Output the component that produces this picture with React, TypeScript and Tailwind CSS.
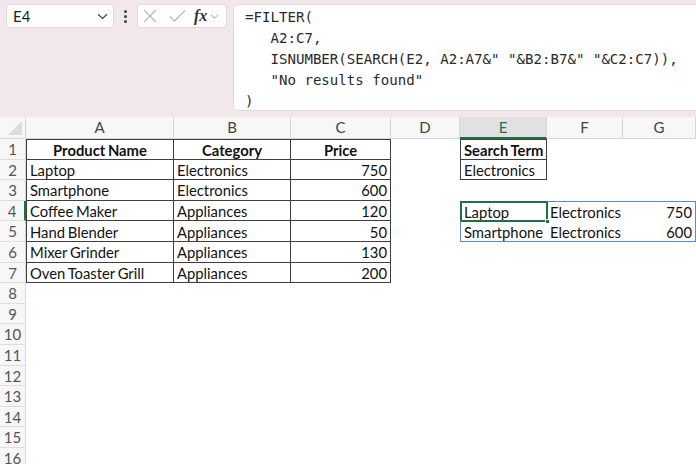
import React from "react";

type Cell = {
  text?: string;
  bold?: boolean;
  align?: "left" | "center" | "right";
  cls?: string;
  selected?: boolean;
};

const COLS = ["A", "B", "C", "D", "E", "F", "G"];
const TB = "border-[#3f3f3f]";
const SP = "border-[#5d8ad8]";

const tableRow = (a: string, b: string, c: string, first = false): Cell[] => [
  {
    text: a,
    bold: first,
    align: first ? "center" : "left",
    cls: `border-l border-r border-b ${TB} ${first ? "border-t" : ""}`,
  },
  {
    text: b,
    bold: first,
    align: first ? "center" : "left",
    cls: `border-r border-b ${TB} ${first ? "border-t" : ""}`,
  },
  {
    text: c,
    bold: first,
    align: first ? "center" : "right",
    cls: `border-r border-b ${TB} ${first ? "border-t" : ""}`,
  },
];

const ROWS: Cell[][] = [
  [
    ...tableRow("Product Name", "Category", "Price", true),
    {},
    { text: "Search Term", bold: true, cls: `border ${TB}` },
    {},
    {},
  ],
  [
    ...tableRow("Laptop", "Electronics", "750"),
    {},
    { text: "Electronics", cls: `border-l border-r border-b ${TB}` },
    {},
    {},
  ],
  [...tableRow("Smartphone", "Electronics", "600"), {}, {}, {}, {}],
  [
    ...tableRow("Coffee Maker", "Appliances", "120"),
    {},
    { text: "Laptop", cls: `border-l border-t ${SP}`, selected: true },
    { text: "Electronics", cls: `border-t ${SP}` },
    { text: "750", align: "right", cls: `border-t border-r ${SP}` },
  ],
  [
    ...tableRow("Hand Blender", "Appliances", "50"),
    {},
    { text: "Smartphone", cls: `border-l border-b ${SP}` },
    { text: "Electronics", cls: `border-b ${SP}` },
    { text: "600", align: "right", cls: `border-b border-r ${SP}` },
  ],
  [...tableRow("Mixer Grinder", "Appliances", "130"), {}, {}, {}, {}],
  [...tableRow("Oven Toaster Grill", "Appliances", "200"), {}, {}, {}, {}],
];

const TOTAL_ROWS = 16;

const Chevron = ({ className = "" }: { className?: string }) => (
  <svg width="11" height="7" viewBox="0 0 11 7" className={className}>
    <path d="M1 1.2 L5.5 5.5 L10 1.2" fill="none" stroke="currentColor" strokeWidth="1.2" />
  </svg>
);

const FormulaBar = () => (
  <div className="h-[117px] bg-[#f2e8eb] flex items-start pt-[4px] pl-[6px] gap-0">
    <div className="w-[108px] h-[24px] bg-white rounded-[4px] border border-[#e4dade] flex items-center justify-between pl-[6px] pr-[5px] text-[15px] text-[#222]">
      <span>E4</span>
      <Chevron className="text-[#444]" />
    </div>
    <div className="w-[23px] h-[24px] flex flex-col items-center justify-center gap-[2px]">
      <span className="w-[3px] h-[3px] rounded-full bg-[#444]" />
      <span className="w-[3px] h-[3px] rounded-full bg-[#444]" />
      <span className="w-[3px] h-[3px] rounded-full bg-[#444]" />
    </div>
    <div className="w-[90px] h-[24px] bg-white rounded-[4px] border border-[#e4dade] flex items-center pl-[5px]">
      <svg width="14" height="14" viewBox="0 0 14 14" className="text-[#b5b5b5]">
        <path d="M1 1 L13 13 M13 1 L1 13" stroke="currentColor" strokeWidth="1.1" />
      </svg>
      <svg width="17" height="14" viewBox="0 0 17 14" className="ml-[12px] text-[#b5b5b5]">
        <path d="M1 7.5 L5.5 12 L16 1.5" fill="none" stroke="currentColor" strokeWidth="1.1" />
      </svg>
      <span className="ml-[8px] text-[16px] italic font-bold text-[#333] leading-none font-['Liberation_Serif',serif]">
        fx
      </span>
      <Chevron className="ml-[3px] text-[#999] w-[9px]" />
    </div>
    <div className="ml-[6px] flex-1 h-[107px] bg-white rounded-l-[5px] border border-r-0 border-[#e4dade] pl-[11px] pt-[2px] font-['DejaVu_Sans_Mono',monospace] text-[14.1px] leading-[21px] text-[#2a2a2a] whitespace-pre overflow-hidden">
      {`=FILTER(\n   A2:C7,\n   ISNUMBER(SEARCH(E2, A2:A7&" "&B2:B7&" "&C2:C7)),\n   "No results found"\n)`}
    </div>
  </div>
);

const App = () => {
  return (
    <div className="w-[696px] h-[464px] overflow-hidden bg-white font-['Lato',sans-serif] text-[15px] text-[#111]">
      <FormulaBar />
      <div className="grid grid-cols-[26px_148px_117px_100px_69px_87px_76px_73px] grid-rows-[22px] auto-rows-[20.6px]">
        {/* corner */}
        <div className="relative bg-[#f7f7f7] border-r border-b border-[#d6d6d6]">
          <div className="absolute right-[3px] bottom-[3px] w-0 h-0 border-l-[14px] border-l-transparent border-b-[14px] border-b-[#dcdcdc]" />
        </div>
        {COLS.map((c) =>
          c === "E" ? (
            <div
              key={c}
              className="bg-[#e1e1e1] border-r border-[#d6d6d6] border-b-2 border-b-[#1e7145] flex items-center justify-center text-[#1e7145]"
            >
              {c}
            </div>
          ) : (
            <div
              key={c}
              className="bg-[#f7f7f7] border-r border-b border-[#d6d6d6] flex items-center justify-center text-[#444]"
            >
              {c}
            </div>
          )
        )}
        {Array.from({ length: TOTAL_ROWS }).map((_, r) => {
          const row = ROWS[r] ?? [];
          return (
            <React.Fragment key={r}>
              <div
                className={`bg-[#f7f7f7] border-b border-[#dedede] flex items-center justify-center pt-[1px] text-[#555] ${
                  r === 3 ? "border-r-2 border-r-[#1e7145]" : "border-r border-r-[#d6d6d6]"
                }`}
              >
                {r + 1}
              </div>
              {COLS.map((_, ci) => {
                const cell = row[ci] ?? {};
                const align =
                  cell.align === "center"
                    ? "justify-center"
                    : cell.align === "right"
                    ? "justify-end pr-[3px]"
                    : "justify-start pl-[3px]";
                return (
                  <div
                    key={ci}
                    className={`relative flex items-center pt-[1px] whitespace-nowrap text-[14.8px] [word-spacing:-1px] ${align} ${
                      cell.bold ? "font-bold" : ""
                    } ${cell.cls ?? ""}`}
                  >
                    {cell.text}
                    {cell.selected && (
                      <>
                        <div className="absolute -left-[1px] -top-[1px] -right-[1px] -bottom-[1px] border-2 border-[#1e7145]" />
                        <div className="absolute -right-[3px] -bottom-[3px] w-[5px] h-[5px] bg-[#1e7145] border border-white" />
                      </>
                    )}
                  </div>
                );
              })}
            </React.Fragment>
          );
        })}
      </div>
    </div>
  );
};

export default App;
